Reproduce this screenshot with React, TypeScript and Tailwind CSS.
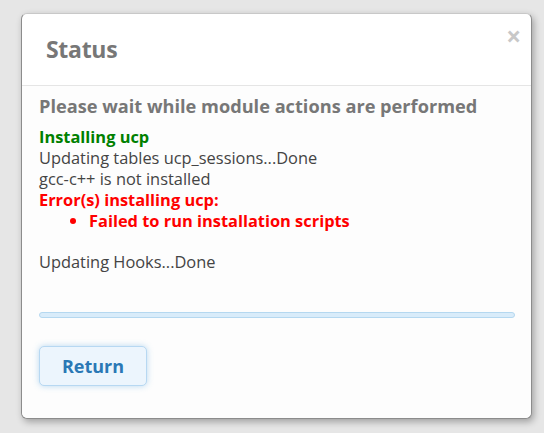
export default function App() {
  return (
    <div className="min-h-screen bg-[#e6e6e6] pt-[13px] pl-[21px] font-['Open_Sans',sans-serif]">
      <div className="w-[511px] h-[406px] rounded-md border border-[#8c8c8c] border-t-[#c8c8c8] bg-white shadow-[2px_3px_7px_rgba(0,0,0,0.3)] flex flex-col">
        {/* header */}
        <div className="relative h-[72px] flex items-center pl-[24px] border-b border-[#e5e5e5]">
          <h3 className="text-[23px] font-bold text-[#777] tracking-[-0.3px]">Status</h3>
          <span className="absolute right-[10px] top-[9px] text-[26px] font-bold leading-none text-[#c8c8c8]">×</span>
        </div>

        {/* body */}
        <div className="flex-1 bg-[#fdfdfd] px-[17px] pt-[8px] rounded-b-md">
          <h4 className="text-[18.2px] font-bold text-[#777] leading-[24px]">
            Please wait while module actions are performed
          </h4>
          <div className="mt-[8px] text-[16.4px] leading-[21px] text-[#444]">
            <div className="font-bold text-[#008000]">Installing ucp</div>
            <div>Updating tables ucp_sessions...Done</div>
            <div>gcc-c++ is not installed</div>
            <div className="font-bold text-[#ff0000]">Error(s) installing ucp:</div>
            <ul className="list-disc pl-[50px] font-bold text-[#ff0000]">
              <li>Failed to run installation scripts</li>
            </ul>
            <div className="h-[20px]" />
            <div>Updating Hooks...Done</div>
          </div>

          <div className="mt-[40px] h-[6px] w-[476px] rounded-full border border-[#b5d8f0] bg-[#d9ecfa]" />

          <button className="mt-[28px] h-[40px] w-[108px] rounded-[5px] border border-[#b7d8f2] bg-[#ecf5fd] text-[18px] font-bold text-[#2a78b5] shadow-[0_0_6px_rgba(100,170,225,0.45)]">
            Return
          </button>
        </div>
      </div>
    </div>
  );
}
